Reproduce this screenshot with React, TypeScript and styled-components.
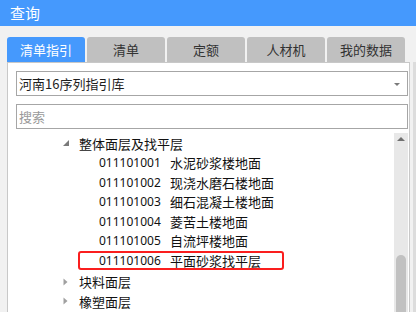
import React from "react";
import styled, { createGlobalStyle } from "styled-components";

const Global = createGlobalStyle`
  html, body { margin: 0; padding: 0; }
  body {
    width: 416px;
    height: 312px;
    overflow: hidden;
    background: #f1f1f1;
    font-family: "Noto Sans CJK SC", "Noto Sans", sans-serif;
  }
`;

const Page = styled.div`
  width: 416px;
  height: 312px;
  overflow: hidden;
  display: flex;
  flex-direction: column;
  background: #f1f1f1;
`;

const Header = styled.div`
  height: 26px;
  flex: none;
  background: #4599fd;
  color: #fff;
  font-size: 15px;
  line-height: 26px;
  padding-left: 10px;
`;

const Body = styled.div`
  flex: 1;
  display: flex;
  flex-direction: column;
  padding: 11px 0 0 7px;
  min-height: 0;
`;

const Tabs = styled.div`
  display: flex;
  gap: 2px;
  height: 25px;
  flex: none;
`;

const Tab = styled.div<{ $active?: boolean }>`
  width: 78px;
  height: 25px;
  border-radius: 3px 3px 0 0;
  background: ${(p) => (p.$active ? "#4599fd" : "#c0c0c0")};
  color: ${(p) => (p.$active ? "#fff" : "#333")};
  font-size: 13px;
  display: flex;
  align-items: center;
  justify-content: center;
`;

const Main = styled.div`
  flex: 1;
  display: flex;
  gap: 3px;
  min-height: 0;
`;

const Panel = styled.div`
  width: 403px;
  box-sizing: border-box;
  border: 1px solid #c8c8c8;
  border-bottom: none;
  background: #fff;
  padding: 8px 1px 0 8px;
  display: flex;
  flex-direction: column;
  min-height: 0;
`;

const Strip = styled.div`
  width: 3px;
  background: #dcdcdc;
`;

const Field = styled.div`
  height: 25px;
  box-sizing: border-box;
  border: 1px solid #a6a6a6;
  display: flex;
  align-items: center;
  padding: 0 7px 0 2px;
  font-size: 13px;
  color: #1e1e1e;
  flex: none;
`;

const FieldText = styled.span`
  flex: 1;
`;

const Placeholder = styled.span`
  color: #9a9a9a;
`;

const Caret = styled.span`
  width: 0;
  height: 0;
  border-left: 3px solid transparent;
  border-right: 3px solid transparent;
  border-top: 3px solid #7a7a7a;
  margin-top: 1px;
`;

const Gap = styled.div<{ $h: number }>`
  height: ${(p) => p.$h}px;
  flex: none;
`;

const TreeArea = styled.div`
  flex: 1;
  display: flex;
  min-height: 0;
`;

const List = styled.div`
  flex: 1;
  display: flex;
  flex-direction: column;
`;

const Row = styled.div<{ $h: number; $mt?: number }>`
  height: ${(p) => p.$h}px;
  margin-top: ${(p) => p.$mt ?? 0}px;
  display: flex;
  align-items: center;
  font-size: 13px;
  color: #111;
  flex: none;
`;

const CatRow = styled(Row)`
  padding-left: 47px;
`;

const Toggle = styled.span`
  width: 16px;
  display: flex;
  align-items: center;
`;

const LeafRow = styled(Row)`
  padding-left: 62px;
`;

const LeafItem = styled.div<{ $selected?: boolean }>`
  width: 206px;
  height: 19px;
  box-sizing: border-box;
  border: 2px solid ${(p) => (p.$selected ? "#fa1e1e" : "transparent")};
  border-radius: 3px;
  padding-left: 19px;
  display: flex;
  align-items: center;
`;

const Code = styled.span`
  width: 71px;
  font-family: "Noto Sans", sans-serif;
  font-size: 12px;
  color: #111;
`;

const Scrollbar = styled.div`
  width: 14px;
  background: #e8e8e8;
  display: flex;
  flex-direction: column;
  align-items: center;
`;

const UpArrow = styled.span`
  margin-top: 4px;
  width: 0;
  height: 0;
  border-left: 4px solid transparent;
  border-right: 4px solid transparent;
  border-bottom: 4px solid #707070;
`;

const Thumb = styled.div`
  margin-top: 114px;
  width: 10px;
  flex: 1;
  background: #c1c1c1;
  border-radius: 5px 5px 0 0;
`;

const Expanded = () => (
  <svg width="6" height="6" viewBox="0 0 6 6">
    <polygon points="6,0 6,6 0,6" fill="#7a7a7a" />
  </svg>
);

const Collapsed = () => (
  <svg width="5" height="8" viewBox="0 0 5 8">
    <polygon points="0.5,0.5 4.5,4 0.5,7.5" fill="#a0a0a0" />
  </svg>
);

const tabs = ["清单指引", "清单", "定额", "人材机", "我的数据"];

const leaves = [
  ["011101001", "水泥砂浆楼地面"],
  ["011101002", "现浇水磨石楼地面"],
  ["011101003", "细石混凝土楼地面"],
  ["011101004", "菱苦土楼地面"],
  ["011101005", "自流坪楼地面"],
  ["011101006", "平面砂浆找平层"],
];

export default function App() {
  return (
    <Page>
      <Global />
      <Header>查询</Header>
      <Body>
        <Tabs>
          {tabs.map((t, i) => (
            <Tab key={t} $active={i === 0}>
              {t}
            </Tab>
          ))}
        </Tabs>
        <Main>
          <Panel>
            <Field>
              <FieldText>河南16序列指引库</FieldText>
              <Caret />
            </Field>
            <Gap $h={8} />
            <Field>
              <Placeholder>搜索</Placeholder>
            </Field>
            <Gap $h={4} />
            <TreeArea>
              <List>
                <CatRow $h={20}>
                  <Toggle>
                    <Expanded />
                  </Toggle>
                  整体面层及找平层
                </CatRow>
                {leaves.map(([c, n], i) => (
                  <LeafRow key={c} $h={19.5}>
                    <LeafItem $selected={i === 5}>
                      <Code>{c}</Code>
                      {n}
                    </LeafItem>
                  </LeafRow>
                ))}
                <CatRow $h={19.5} $mt={2}>
                  <Toggle>
                    <Collapsed />
                  </Toggle>
                  块料面层
                </CatRow>
                <CatRow $h={19.5}>
                  <Toggle>
                    <Collapsed />
                  </Toggle>
                  橡塑面层
                </CatRow>
              </List>
              <Scrollbar>
                <UpArrow />
                <Thumb />
              </Scrollbar>
            </TreeArea>
          </Panel>
          <Strip />
        </Main>
      </Body>
    </Page>
  );
}
